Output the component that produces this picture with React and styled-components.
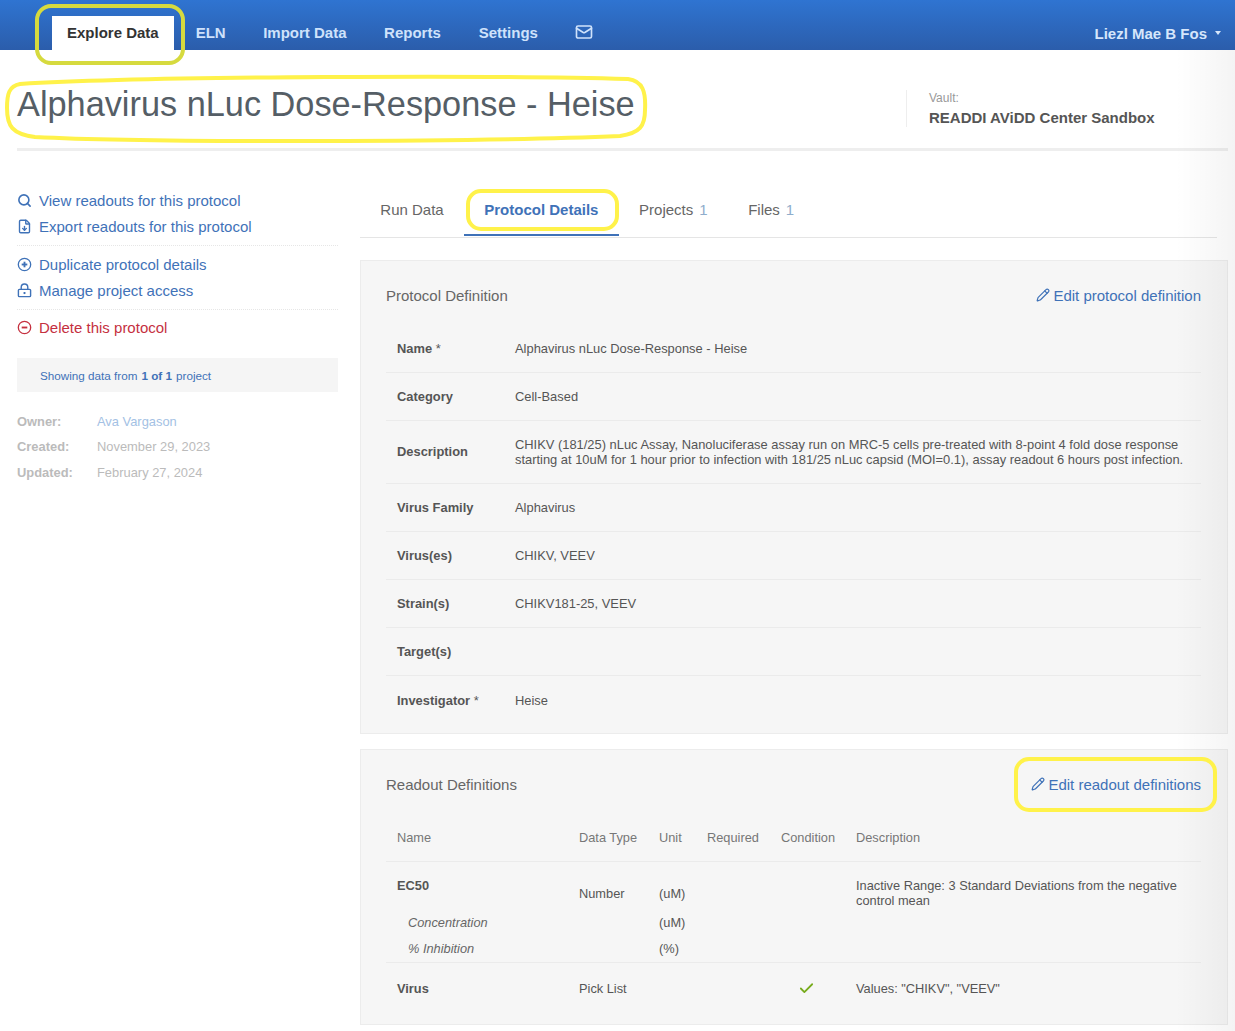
import React from "react";
import styled, { createGlobalStyle } from "styled-components";
import { Search, FileDown, Pencil, Check, Mail } from "lucide-react";

const GlobalStyle = createGlobalStyle`
  html, body {
    margin: 0;
    padding: 0;
    background: #fff;
  }
  body {
    font-family: "Liberation Sans", Arial, sans-serif;
    color: #555;
    overflow: hidden;
  }
`;

const Page = styled.div`
  position: relative;
  width: 1235px;
  height: 1031px;
  overflow: hidden;
`;

const Nav = styled.nav`
  display: flex;
  height: 50px;
  padding: 16px 14px 0 52px;
  box-sizing: border-box;
  align-items: stretch;
  background: linear-gradient(#2f74d1, #2b5dab);
`;

const NavTab = styled.a`
  display: flex;
  align-items: center;
  height: 34px;
  padding: 0 ${(p) => (p.$active ? "15px" : "0")} 2px;
  box-sizing: border-box;
  margin-right: ${(p) => p.$gap || 0}px;
  background: ${(p) => (p.$active ? "#fff" : "transparent")};
  color: ${(p) => (p.$active ? "#333" : "#cfe2fb")};
  font-size: 15px;
  font-weight: 700;
`;

const UserMenu = styled.div`
  margin-left: auto;
  display: flex;
  align-items: center;
  height: 34px;
  color: #d6e6fb;
  font-size: 15px;
  font-weight: 700;
  &::after {
    content: "";
    margin-left: 8px;
    border-left: 3px solid transparent;
    border-right: 3px solid transparent;
    border-top: 4px solid #d6e6fb;
  }
`;

const Header = styled.header`
  display: flex;
  align-items: center;
  justify-content: space-between;
  height: 101px;
  margin: 0 7px 0 17px;
  padding-top: 10px;
  box-sizing: border-box;
  border-bottom: 3px solid #eeeeee;
`;

const Title = styled.h1`
  margin: 0;
  font-size: 34.3px;
  font-weight: 400;
  color: #555e66;
`;

const Vault = styled.div`
  width: 299px;
  height: 36px;
  padding: 1px 0 0 22px;
  border-left: 1px solid #eee;
  margin-top: 9px;
`;

const VaultLabel = styled.div`
  font-size: 12px;
  line-height: 14px;
  color: #999;
`;

const VaultName = styled.div`
  margin-top: 4px;
  font-size: 15px;
  line-height: 18px;
  font-weight: 700;
  color: #555;
`;

const Body = styled.div`
  display: flex;
  padding: 0 7px 0 17px;
  gap: 22px;
`;

const Sidebar = styled.aside`
  width: 321px;
  flex: none;
  padding-top: 40px;
`;

const ActionGroup = styled.div`
  display: flex;
  flex-direction: column;
  gap: 8px;
  padding-bottom: ${(p) => (p.$last ? "0" : "10px")};
  margin-bottom: ${(p) => (p.$last ? "0" : "9px")};
  margin-top: ${(p) => (p.$last ? "-1px" : "0")};
  border-bottom: ${(p) => (p.$last ? "none" : "1px dotted #e6e6e6")};
`;

const Action = styled.a`
  display: flex;
  align-items: center;
  height: 18px;
  gap: 7px;
  font-size: 15px;
  color: ${(p) => (p.$danger ? "#c5303f" : "#3f72b8")};
  svg {
    flex: none;
    width: 15px;
    height: 15px;
  }
`;

const ProjectNote = styled.div`
  margin-top: 22px;
  height: 34px;
  display: flex;
  align-items: center;
  padding-left: 23px;
  background: #f5f5f5;
  font-size: 11.7px;
  color: #3f72b8;
  b {
    margin: 0 4px;
  }
`;

const MetaList = styled.dl`
  display: grid;
  grid-template-columns: 80px 1fr;
  grid-auto-rows: 25.5px;
  margin: 16.5px 0 0;
  align-items: center;
  font-size: 12.9px;
`;

const MetaLabel = styled.dt`
  font-weight: 700;
  color: #bbb;
`;

const MetaValue = styled.dd`
  margin: 0;
  color: ${(p) => (p.$link ? "#a3c1e4" : "#bbb")};
`;

const Main = styled.main`
  flex: 1;
  min-width: 0;
`;

const Tabs = styled.div`
  display: flex;
  height: 57px;
  margin: 29px 11px 22px 0;
  border-bottom: 1px solid #e5e5e5;
`;

const Tab = styled.a`
  display: flex;
  align-items: center;
  height: 56px;
  padding: 5px 20.3px 0;
  box-sizing: border-box;
  font-size: 15px;
  font-weight: ${(p) => (p.$active ? 700 : 400)};
  color: ${(p) => (p.$active ? "#3f72b8" : "#666")};
  border-bottom: 2px solid ${(p) => (p.$active ? "#3f72b8" : "transparent")};
`;

const Count = styled.span`
  margin-left: 6px;
  color: #8fadcc;
`;

const Panel = styled.section`
  background: #f6f6f6;
  border: 1px solid #ececec;
  padding: 0 26px 0 25px;
  margin-bottom: 15px;
  box-sizing: border-box;
  height: ${(p) => p.$height}px;
`;

const PanelHead = styled.div`
  display: flex;
  justify-content: space-between;
  align-items: center;
  height: 64px;
  padding-top: 4px;
  box-sizing: border-box;
  color: #666;
  font-size: 15px;
`;

const EditLink = styled.a`
  display: flex;
  align-items: center;
  gap: 3px;
  color: #3f72b8;
  font-size: 15px;
  svg {
    width: 14px;
    height: 14px;
  }
`;

const DefRow = styled.div`
  display: grid;
  grid-template-columns: 118px 1fr;
  align-items: center;
  min-height: ${(p) => p.$height || 48}px;
  padding-left: 11px;
  padding-bottom: ${(p) => (p.$height ? 1 : 0)}px;
  box-sizing: border-box;
  border-bottom: ${(p) => (p.$last ? "none" : "1px solid #ebebeb")};
  font-size: 12.9px;
  line-height: 15px;
`;

const DefLabel = styled.div`
  font-weight: 700;
  color: #555;
  span {
    font-weight: 400;
  }
`;

const DefValue = styled.div`
  color: #555;
  white-space: nowrap;
`;

const ReadoutRow = styled.div`
  display: grid;
  grid-template-columns: 182px 80px 48px 74px 75px 1fr;
  padding-left: 11px;
  align-items: ${(p) => p.$align || "center"};
  height: ${(p) => p.$height}px;
  padding-top: ${(p) => p.$top || 0}px;
  box-sizing: border-box;
  border-bottom: ${(p) => (p.$line ? "1px solid #ebebeb" : "none")};
  font-size: 12.8px;
  line-height: 15px;
  color: #555;
`;

const ColHead = styled.div`
  color: #777;
`;

const ReadoutName = styled.div`
  font-weight: 700;
`;

const SubName = styled.div`
  font-style: italic;
  padding-left: 11px;
  color: #666;
`;

const Nudged = styled.div`
  padding-top: ${(p) => p.$top || 0}px;
`;

const CheckCell = styled.div`
  display: flex;
  justify-content: center;
  padding-right: 24px;
  color: #77ab1c;
  svg {
    width: 17px;
    height: 17px;
  }
`;

const Annotations = styled.svg`
  position: absolute;
  left: 0;
  top: 0;
  width: 1235px;
  height: 1031px;
  pointer-events: none;
`;

const EdgeShade = styled.div`
  position: absolute;
  top: 50px;
  right: 0;
  bottom: 0;
  width: 60px;
  pointer-events: none;
  background: linear-gradient(to right, rgba(0, 0, 0, 0), rgba(0, 0, 0, 0.045));
`;

// the sidebar icons have a thin ring and a heavy glyph inside
const RingIcon = ({ plus }) => (
  <svg viewBox="0 0 16 16" fill="none" stroke="currentColor">
    <circle cx="8" cy="8" r="6.6" strokeWidth="1.4" />
    <path d="M5 8h6" strokeWidth="2" />
    {plus && <path d="M8 5v6" strokeWidth="2" />}
  </svg>
);

const WideLock = () => (
  <svg viewBox="0 0 16 16" fill="none" stroke="currentColor" strokeWidth="1.5">
    <rect x="1.5" y="6.8" width="13" height="7.7" rx="1" />
    <path d="M4.5 6.8V4.6a3.5 3.5 0 0 1 7 0v2.2" />
    <path d="M8 9.6v2.2" strokeWidth="2" />
  </svg>
);

const definition = [
  { label: "Name", req: true, value: "Alphavirus nLuc Dose-Response - Heise" },
  { label: "Category", value: "Cell-Based" },
  {
    label: "Description",
    height: 63,
    value: (
      <>
        CHIKV (181/25) nLuc Assay, Nanoluciferase assay run on MRC-5 cells pre-treated with 8-point 4 fold dose response
        <br />
        starting at 10uM for 1 hour prior to infection with 181/25 nLuc capsid (MOI=0.1), assay readout 6 hours post infection.
      </>
    ),
  },
  { label: "Virus Family", value: "Alphavirus" },
  { label: "Virus(es)", value: "CHIKV, VEEV" },
  { label: "Strain(s)", value: "CHIKV181-25, VEEV" },
  { label: "Target(s)", value: "" },
  { label: "Investigator", req: true, value: "Heise", last: true },
];

export default function App() {
  return (
    <Page>
      <GlobalStyle />
      <Nav>
        <NavTab $active $gap={22}>Explore Data</NavTab>
        <NavTab $gap={37.5}>ELN</NavTab>
        <NavTab $gap={37.5}>Import Data</NavTab>
        <NavTab $gap={38}>Reports</NavTab>
        <NavTab $gap={37}>Settings</NavTab>
        <NavTab>
          <Mail size={18} strokeWidth={2.2} />
        </NavTab>
        <UserMenu>Liezl Mae B Fos</UserMenu>
      </Nav>

      <Header>
        <Title>Alphavirus nLuc Dose-Response - Heise</Title>
        <Vault>
          <VaultLabel>Vault:</VaultLabel>
          <VaultName>READDI AViDD Center Sandbox</VaultName>
        </Vault>
      </Header>

      <Body>
        <Sidebar>
          <ActionGroup>
            <Action><Search strokeWidth={2.6} />View readouts for this protocol</Action>
            <Action><FileDown strokeWidth={2.2} />Export readouts for this protocol</Action>
          </ActionGroup>
          <ActionGroup>
            <Action><RingIcon plus />Duplicate protocol details</Action>
            <Action><WideLock />Manage project access</Action>
          </ActionGroup>
          <ActionGroup $last>
            <Action $danger><RingIcon />Delete this protocol</Action>
          </ActionGroup>
          <ProjectNote>
            Showing data from <b>1 of 1</b> project
          </ProjectNote>
          <MetaList>
            <MetaLabel>Owner:</MetaLabel>
            <MetaValue $link>Ava Vargason</MetaValue>
            <MetaLabel>Created:</MetaLabel>
            <MetaValue>November 29, 2023</MetaValue>
            <MetaLabel>Updated:</MetaLabel>
            <MetaValue>February 27, 2024</MetaValue>
          </MetaList>
        </Sidebar>

        <Main>
          <Tabs>
            <Tab>Run Data</Tab>
            <Tab $active>Protocol Details</Tab>
            <Tab>Projects<Count>1</Count></Tab>
            <Tab>Files<Count>1</Count></Tab>
          </Tabs>

          <Panel $height={474}>
            <PanelHead>
              Protocol Definition
              <EditLink><Pencil />Edit protocol definition</EditLink>
            </PanelHead>
            {definition.map((row) => (
              <DefRow key={row.label} $height={row.height} $last={row.last}>
                <DefLabel>
                  {row.label}
                  {row.req && <span> *</span>}
                </DefLabel>
                <DefValue>{row.value}</DefValue>
              </DefRow>
            ))}
          </Panel>

          <Panel $height={276}>
            <PanelHead>
              Readout Definitions
              <EditLink><Pencil />Edit readout definitions</EditLink>
            </PanelHead>
            <ReadoutRow $height={48} $line>
              <ColHead>Name</ColHead>
              <ColHead>Data Type</ColHead>
              <ColHead>Unit</ColHead>
              <ColHead>Required</ColHead>
              <ColHead>Condition</ColHead>
              <ColHead>Description</ColHead>
            </ReadoutRow>
            <ReadoutRow $height={47} $align="start" $top={16}>
              <ReadoutName>EC50</ReadoutName>
              <Nudged $top={8}>Number</Nudged>
              <Nudged $top={8}>(uM)</Nudged>
              <div />
              <div />
              <div>Inactive Range: 3 Standard Deviations from the negative control mean</div>
            </ReadoutRow>
            <ReadoutRow $height={26}>
              <SubName>Concentration</SubName>
              <div />
              <div>(uM)</div>
            </ReadoutRow>
            <ReadoutRow $height={28} $line>
              <SubName>% Inhibition</SubName>
              <div />
              <div>(%)</div>
            </ReadoutRow>
            <ReadoutRow $height={50}>
              <ReadoutName>Virus</ReadoutName>
              <div>Pick List</div>
              <div />
              <div />
              <CheckCell><Check strokeWidth={2.5} /></CheckCell>
              <div>Values: "CHIKV", "VEEV"</div>
            </ReadoutRow>
          </Panel>
        </Main>
      </Body>

      <EdgeShade />

      <Annotations viewBox="0 0 1235 1031" fill="none" strokeWidth="4">
        <rect x="37" y="6" width="146" height="57" rx="14" stroke="#d6da3e" />
        <path
          d="M20 84 C150 76 500 75 628 79 C643 81 646 92 645 110 C645 126 640 133 620 136 C480 142 150 143 35 137 C12 134 7 126 7 108 C7 94 9 86 20 84 Z"
          stroke="#fff24a"
        />
        <rect x="468" y="191" width="149" height="38" rx="13" stroke="#fff24a" />
        <rect x="1016" y="759" width="199" height="51" rx="13" stroke="#fff24a" />
      </Annotations>
    </Page>
  );
}
